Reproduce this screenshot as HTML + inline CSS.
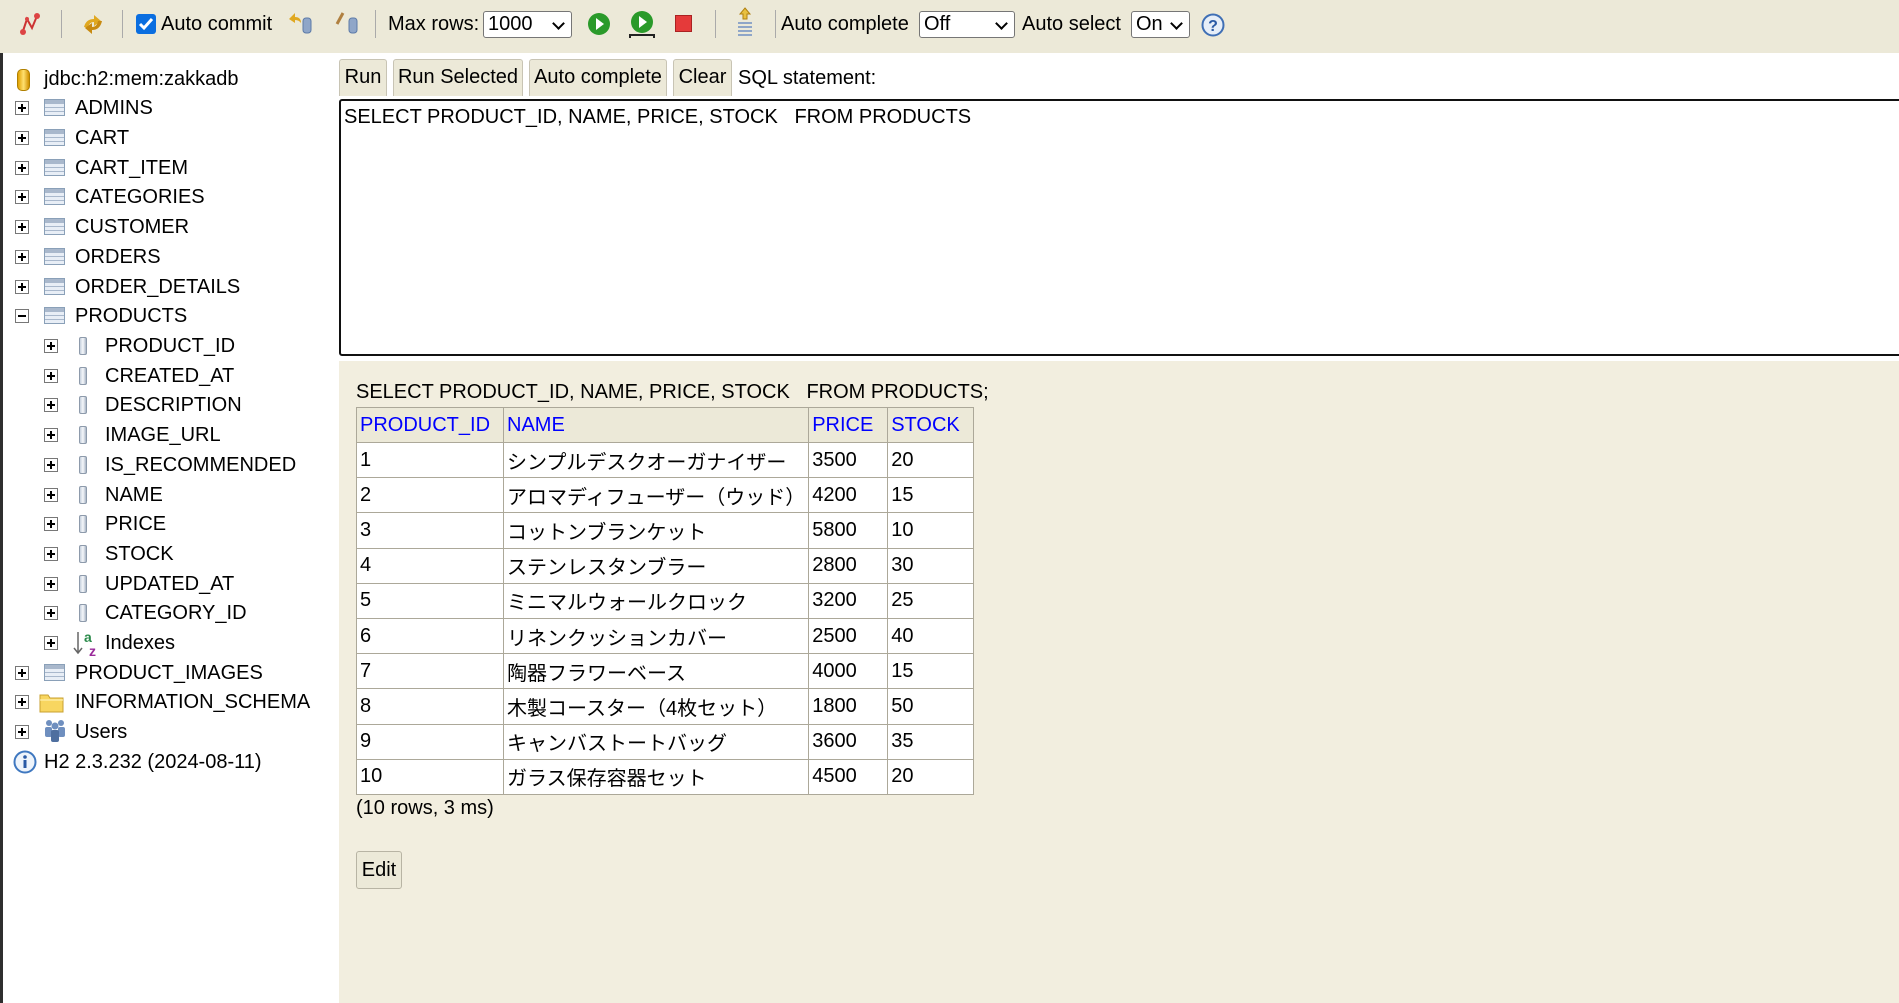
<!DOCTYPE html>
<html><head><meta charset="utf-8">
<style>
*{margin:0;padding:0;box-sizing:border-box}
body{width:1899px;height:1003px;overflow:hidden;font-family:"Liberation Sans","Noto Sans CJK JP",sans-serif;font-size:20px;color:#000;background:#fff;position:relative}
.abs{position:absolute}
#tb{left:0;top:0;width:1899px;height:53px;background:#ece9d8}
.sep{position:absolute;top:10px;width:1px;height:28px;background:#aaa}
.t{position:absolute;top:13px;line-height:22px;white-space:nowrap}
.sel{position:absolute;top:11px;height:27px;background:#fff;border:1px solid #767676;border-radius:3px;font-size:20px;line-height:25px;padding-left:4px}
.sel:after{content:"";position:absolute;right:8px;top:7px;width:7px;height:7px;border-right:2px solid #000;border-bottom:2px solid #000;transform:rotate(45deg)}
#left{left:0;top:53px;width:339px;height:950px;background:#fff;border-left:3px solid #2e2e2e}
.row{position:absolute;height:30px;line-height:30px;white-space:nowrap}
.pb{position:absolute;width:14px;height:14px;border:1px solid #777;background:#fff}
.pb:before{content:"";position:absolute;left:2px;top:5px;width:8px;height:2px;background:#000}
.pb.p:after{content:"";position:absolute;left:5px;top:2px;width:2px;height:8px;background:#000}
.tab{position:absolute;width:21px;height:17px;border:1px solid #8aa0b8;background:repeating-linear-gradient(#e8eef6 0 3px,#a9b8cc 3px 4px)}
.tab:before{content:"";position:absolute;left:0;right:0;top:0;height:4px;background:#a9b8cc}
.col{position:absolute;width:8px;height:18px;border:1px solid #8d9aab;border-radius:2px;background:linear-gradient(90deg,#c7d1de,#f5f7fa,#aab6c6)}
#right{left:339px;top:53px;width:1560px;height:950px;background:#fff}
.btn{position:absolute;top:59px;height:37px;background:#ece9d8;border:1px solid #c8c4b4;border-bottom:none;border-radius:3px 3px 0 0;line-height:34px;text-align:center}
#ta{left:339px;top:99px;width:1570px;height:257px;border:2px solid #111;border-radius:3px;background:#fff;padding:6px 3px;line-height:20px}
#res{left:339px;top:361px;width:1560px;height:642px;background:#f2eedf}
table{position:absolute;left:356px;top:407px;border-collapse:collapse;background:#fff}
td,th{border:1px solid #aca899;height:35.2px;padding:0 3px;text-align:left;font-weight:normal;white-space:nowrap}
th{background:#ece9d8;color:#0000ff;height:35px}
</style></head><body>
<div id="tb" class="abs">
<svg class="abs" style="left:18px;top:11px" width="26" height="26" viewBox="0 0 26 26"><path d="M5 20 L9 8 L14 17 L19 5" stroke="#c33" stroke-width="2" fill="none"/><circle cx="5" cy="21" r="3" fill="#d44"/><circle cx="19" cy="5" r="3" fill="#d44"/><circle cx="9" cy="8" r="2" fill="#d44"/></svg>
<div class="sep" style="left:61px"></div>
<svg class="abs" style="left:80px;top:11px" width="26" height="26" viewBox="0 0 26 26"><path d="M4 16 Q6 8 14 8 L14 4 L21 10 L14 15 L14 11 Q9 11 8 17Z" fill="#e0a820"/><path d="M22 10 Q20 19 12 19 L12 23 L5 17 L12 12 L12 16 Q17 16 18 10Z" fill="#c88a10"/></svg>
<div class="sep" style="left:122px"></div>
<div class="abs" style="left:136px;top:14px;width:20px;height:20px;background:#0a6ee0;border-radius:3px"><svg width="20" height="20"><path d="M4 10 L8 14 L16 5" stroke="#fff" stroke-width="3" fill="none"/></svg></div>
<div class="t" style="left:161px">Auto commit</div>
<svg class="abs" style="left:287px;top:10px" width="28" height="26" viewBox="0 0 28 26"><path d="M2 9 L8 3 L8 7 Q14 7 14 13 Q12 10 8 10 L8 13Z" fill="#e0a820"/><rect x="16" y="8" width="8" height="15" rx="3" fill="#8fa6c8" stroke="#5c7aa8"/></svg>
<svg class="abs" style="left:333px;top:10px" width="28" height="26" viewBox="0 0 28 26"><path d="M4 14 L10 3" stroke="#b08040" stroke-width="3"/><rect x="16" y="8" width="8" height="15" rx="3" fill="#8fa6c8" stroke="#5c7aa8"/></svg>
<div class="sep" style="left:375px"></div>
<div class="t" style="left:388px">Max rows:</div>
<div class="sel" style="left:483px;width:89px">1000</div>
<svg class="abs" style="left:587px;top:12px" width="24" height="24"><circle cx="12" cy="12" r="11" fill="#2a9a2a"/><path d="M9 6 L17 12 L9 18Z" fill="#fff"/></svg>
<svg class="abs" style="left:628px;top:10px" width="28" height="30"><circle cx="14" cy="12" r="11" fill="#2a9a2a"/><path d="M11 6 L19 12 L11 18Z" fill="#fff"/><path d="M2 28 L2 25 L26 25 L26 28" stroke="#222" stroke-width="2" fill="none"/></svg>
<div class="abs" style="left:675px;top:15px;width:17px;height:17px;background:#e53a3a;border:1px solid #a22"></div>
<div class="sep" style="left:715px"></div>
<svg class="abs" style="left:734px;top:6px" width="22" height="32"><path d="M11 2 L16 8 L13 8 L13 13 L9 13 L9 8 L6 8Z" fill="#e8c040" stroke="#b08010"/><g stroke="#8fa6c8" stroke-width="2"><path d="M4 17h14M4 21h14M4 25h14M4 29h14"/></g></svg>
<div class="sep" style="left:775px"></div>
<div class="t" style="left:781px">Auto complete</div>
<div class="sel" style="left:919px;width:96px">Off</div>
<div class="t" style="left:1022px">Auto select</div>
<div class="sel" style="left:1131px;width:59px">On</div>
<svg class="abs" style="left:1201px;top:13px" width="24" height="24"><circle cx="12" cy="12" r="10.5" fill="#e6eef8" stroke="#3f6fb5" stroke-width="2"/><text x="12" y="18" text-anchor="middle" font-family="Liberation Sans" font-weight="bold" font-size="16" fill="#2a5aa5">?</text></svg>
</div>

<div id="left" class="abs">
<div class="abs" style="left:14px;top:16px;width:13px;height:22px;border-radius:5px;background:linear-gradient(90deg,#e0a000,#ffe070,#d09000);border:1px solid #b08000"></div>
<div class="row" style="left:41px;top:11px">jdbc:h2:mem:zakkadb</div>
<div class="pb p" style="left:12px;top:48px"></div><div class="tab" style="left:41px;top:46px"></div><div class="row" style="left:72px;top:40px">ADMINS</div>
<div class="pb p" style="left:12px;top:78px"></div><div class="tab" style="left:41px;top:76px"></div><div class="row" style="left:72px;top:70px">CART</div>
<div class="pb p" style="left:12px;top:108px"></div><div class="tab" style="left:41px;top:106px"></div><div class="row" style="left:72px;top:100px">CART_ITEM</div>
<div class="pb p" style="left:12px;top:137px"></div><div class="tab" style="left:41px;top:135px"></div><div class="row" style="left:72px;top:129px">CATEGORIES</div>
<div class="pb p" style="left:12px;top:167px"></div><div class="tab" style="left:41px;top:165px"></div><div class="row" style="left:72px;top:159px">CUSTOMER</div>
<div class="pb p" style="left:12px;top:197px"></div><div class="tab" style="left:41px;top:195px"></div><div class="row" style="left:72px;top:189px">ORDERS</div>
<div class="pb p" style="left:12px;top:227px"></div><div class="tab" style="left:41px;top:225px"></div><div class="row" style="left:72px;top:219px">ORDER_DETAILS</div>
<div class="pb" style="left:12px;top:256px"></div><div class="tab" style="left:41px;top:254px"></div><div class="row" style="left:72px;top:248px">PRODUCTS</div>
<div class="pb p" style="left:41px;top:286px"></div><div class="col" style="left:76px;top:284px"></div><div class="row" style="left:102px;top:278px">PRODUCT_ID</div>
<div class="pb p" style="left:41px;top:316px"></div><div class="col" style="left:76px;top:314px"></div><div class="row" style="left:102px;top:308px">CREATED_AT</div>
<div class="pb p" style="left:41px;top:345px"></div><div class="col" style="left:76px;top:343px"></div><div class="row" style="left:102px;top:337px">DESCRIPTION</div>
<div class="pb p" style="left:41px;top:375px"></div><div class="col" style="left:76px;top:373px"></div><div class="row" style="left:102px;top:367px">IMAGE_URL</div>
<div class="pb p" style="left:41px;top:405px"></div><div class="col" style="left:76px;top:403px"></div><div class="row" style="left:102px;top:397px">IS_RECOMMENDED</div>
<div class="pb p" style="left:41px;top:435px"></div><div class="col" style="left:76px;top:433px"></div><div class="row" style="left:102px;top:427px">NAME</div>
<div class="pb p" style="left:41px;top:464px"></div><div class="col" style="left:76px;top:462px"></div><div class="row" style="left:102px;top:456px">PRICE</div>
<div class="pb p" style="left:41px;top:494px"></div><div class="col" style="left:76px;top:492px"></div><div class="row" style="left:102px;top:486px">STOCK</div>
<div class="pb p" style="left:41px;top:524px"></div><div class="col" style="left:76px;top:522px"></div><div class="row" style="left:102px;top:516px">UPDATED_AT</div>
<div class="pb p" style="left:41px;top:553px"></div><div class="col" style="left:76px;top:551px"></div><div class="row" style="left:102px;top:545px">CATEGORY_ID</div>
<div class="pb p" style="left:41px;top:583px"></div>
<svg class="abs" style="left:68px;top:575px" width="30" height="30"><path d="M7 4 L7 24 M3 20 L7 25 L11 20" stroke="#666" stroke-width="1.5" fill="none"/><text x="13" y="14" font-family="Liberation Sans" font-weight="bold" font-size="14" fill="#2a8a4a">a</text><text x="18" y="28" font-family="Liberation Sans" font-weight="bold" font-size="14" fill="#9a2a9a">z</text></svg>
<div class="row" style="left:102px;top:575px">Indexes</div>
<div class="pb p" style="left:12px;top:613px"></div><div class="tab" style="left:41px;top:611px"></div><div class="row" style="left:72px;top:605px">PRODUCT_IMAGES</div>
<div class="pb p" style="left:12px;top:642px"></div>
<svg class="abs" style="left:36px;top:637px" width="26" height="24"><path d="M1 5 L9 5 L11 8 L24 8 L24 22 L1 22Z" fill="#f8d660" stroke="#c8a030"/><path d="M1 10 L24 10" stroke="#fff5c0"/></svg>
<div class="row" style="left:72px;top:634px">INFORMATION_SCHEMA</div>
<div class="pb p" style="left:12px;top:672px"></div>
<svg class="abs" style="left:40px;top:664px" width="24" height="26"><g fill="#6f8fbf"><circle cx="6" cy="6" r="3"/><circle cx="18" cy="6" r="3"/><circle cx="12" cy="9" r="3.5"/><rect x="2" y="10" width="7" height="10" rx="2"/><rect x="15" y="10" width="7" height="10" rx="2"/><rect x="8" y="13" width="8" height="12" rx="2" fill="#4f6f9f"/></g></svg>
<div class="row" style="left:72px;top:664px">Users</div>
<svg class="abs" style="left:10px;top:697px" width="24" height="24"><circle cx="12" cy="12" r="10.5" fill="#eef4fb" stroke="#3f78c0" stroke-width="2"/><circle cx="12" cy="7" r="1.8" fill="#2a5aa5"/><rect x="10.5" y="10" width="3" height="8" fill="#2a5aa5"/></svg>
<div class="row" style="left:41px;top:694px">H2 2.3.232 (2024-08-11)</div>
</div>

<div id="right" class="abs"></div>
<div class="btn" style="left:339px;width:48px">Run</div>
<div class="btn" style="left:393px;width:130px">Run Selected</div>
<div class="btn" style="left:529px;width:138px">Auto complete</div>
<div class="btn" style="left:673px;width:59px">Clear</div>
<div class="t" style="left:738px;top:67px">SQL statement:</div>
<div id="ta" class="abs">SELECT PRODUCT_ID, NAME, PRICE, STOCK &nbsp; FROM PRODUCTS</div>

<div id="res" class="abs"></div>
<div class="t" style="left:356px;top:381px">SELECT PRODUCT_ID, NAME, PRICE, STOCK &nbsp; FROM PRODUCTS;</div>
<table>
<tr><th style="width:147px">PRODUCT_ID</th><th style="width:303px">NAME</th><th style="width:79px">PRICE</th><th style="width:86px">STOCK</th></tr>
<tr><td>1</td><td>シンプルデスクオーガナイザー</td><td>3500</td><td>20</td></tr>
<tr><td>2</td><td>アロマディフューザー（ウッド）</td><td>4200</td><td>15</td></tr>
<tr><td>3</td><td>コットンブランケット</td><td>5800</td><td>10</td></tr>
<tr><td>4</td><td>ステンレスタンブラー</td><td>2800</td><td>30</td></tr>
<tr><td>5</td><td>ミニマルウォールクロック</td><td>3200</td><td>25</td></tr>
<tr><td>6</td><td>リネンクッションカバー</td><td>2500</td><td>40</td></tr>
<tr><td>7</td><td>陶器フラワーベース</td><td>4000</td><td>15</td></tr>
<tr><td>8</td><td>木製コースター（4枚セット）</td><td>1800</td><td>50</td></tr>
<tr><td>9</td><td>キャンバストートバッグ</td><td>3600</td><td>35</td></tr>
<tr><td>10</td><td>ガラス保存容器セット</td><td>4500</td><td>20</td></tr>
</table>
<div class="t" style="left:356px;top:797px">(10 rows, 3 ms)</div>
<div class="abs" style="left:356px;top:851px;width:46px;height:38px;background:#ece9d8;border:1px solid #b8b4a4;border-radius:3px;line-height:36px;text-align:center">Edit</div>
</body></html>
